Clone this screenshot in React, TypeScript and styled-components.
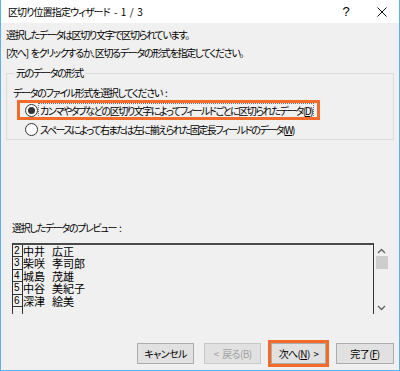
import React from "react";
import styled, { createGlobalStyle } from "styled-components";

const Global = createGlobalStyle`
  html, body { margin: 0; padding: 0; background: #f0f0f0; }
  body {
    font-family: "Noto Sans CJK JP", "Noto Sans", sans-serif;
    font-size: 10px;
    letter-spacing: -1.3px;
    word-spacing: 2px;
    color: #000;
    font-feature-settings: "palt";
  }
  * { box-sizing: border-box; }
`;

const Window = styled.div`
  width: 400px;
  height: 371px;
  border: 1px solid #5cb0ec;
  border-top: none;
  display: flex;
  flex-direction: column;
  background: #f0f0f0;
`;

const TitleBar = styled.div`
  height: 23px;
  background: #fff;
  display: flex;
  align-items: center;
  padding-left: 7px;
  flex-shrink: 0;
`;

const Title = styled.div`
  flex: 1;
  line-height: 16px;
  letter-spacing: -0.9px;
  word-spacing: 3px;
  white-space: pre;
`;

const Help = styled.div`
  width: 14px;
  margin-right: 12px;
  text-align: center;
  font-family: "Liberation Sans", sans-serif;
  font-size: 13px;
  letter-spacing: 0;
`;

const Close = styled.div`
  width: 34px;
  display: flex;
  justify-content: center;
  align-items: center;
`;

const Body = styled.div`
  flex: 1;
  display: flex;
  flex-direction: column;
  padding: 0 5px;
`;

const Line = styled.div<{ $top?: number; $indent?: number }>`
  line-height: 18px;
  margin-top: ${(p) => p.$top ?? 0}px;
  padding-left: ${(p) => p.$indent ?? 0}px;
  white-space: pre;
`;

const Group = styled.fieldset`
  margin: 3px 0 0 0;
  padding: 0 0 3px 6px;
  border: 1px solid #dcdcdc;
  min-width: 0;
`;

const Legend = styled.legend`
  margin-left: 1px;
  padding: 0 2px;
  line-height: 16px;
`;

const Options = styled.div`
  display: flex;
  flex-direction: column;
  align-items: flex-start;
  gap: 5px;
  margin: 1px 0 0 7px;
`;

const OptionRow = styled.div<{ $marked?: boolean }>`
  height: 14px;
  display: inline-flex;
  align-items: center;
  padding: 0 7px 0 5px;
  width: ${(p) => (p.$marked ? "297px" : "auto")};
  outline: ${(p) => (p.$marked ? "3px solid #f26b2a" : "none")};
  white-space: pre;
`;

const Radio = styled.span<{ $checked?: boolean }>`
  width: 13px;
  height: 13px;
  border-radius: 50%;
  border: 1px solid #333;
  background: #fff;
  flex-shrink: 0;
  display: flex;
  align-items: center;
  justify-content: center;
  &::after {
    content: "";
    width: 7px;
    height: 7px;
    border-radius: 50%;
    background: #333;
    display: ${(p) => (p.$checked ? "block" : "none")};
  }
`;

const OptionText = styled.span<{ $focus?: boolean }>`
  line-height: 13px;
  padding: 0 1px;
  letter-spacing: -1.45px;
  border: 1px ${(p) => (p.$focus ? "dotted #6d6d6d" : "solid transparent")};
`;

const PreviewRow = styled.div`
  display: flex;
  margin: 6px 0 0 6px;
  height: 71px;
`;

const PreviewBox = styled.div`
  width: 362px;
  border-top: 2px solid #4a4a4a;
  border-left: 1px solid #333;
  border-right: 1px solid #333;
  display: flex;
  overflow: hidden;
`;

const NumCol = styled.div`
  width: 10px;
  border-right: 1px solid #333;
  display: flex;
  flex-direction: column;
`;

const NumCell = styled.div`
  height: 12.4px;
  border-bottom: 1px solid #333;
  font-family: "Liberation Sans", sans-serif;
  font-size: 10px;
  letter-spacing: 0;
  line-height: 12px;
  padding-left: 1px;
  flex-shrink: 0;
`;

const DataCol = styled.div`
  display: flex;
  flex-direction: column;
`;

const DataRow = styled.div`
  height: 12.4px;
  line-height: 12.4px;
  display: grid;
  grid-template-columns: 29px auto;
  font-size: 11px;
  letter-spacing: 0;
  flex-shrink: 0;
`;

const ScrollBar = styled.div`
  width: 14px;
  display: flex;
  flex-direction: column;
  align-items: center;
  padding: 5px 0 3px 1px;
`;

const Thumb = styled.div`
  width: 12px;
  height: 13px;
  background: #cdcdcd;
  margin-top: 2px;
`;

const Spacer = styled.div`
  flex: 1;
`;

const Buttons = styled.div`
  display: flex;
  justify-content: flex-end;
  gap: 10px;
  margin-top: 29px;
`;

const Button = styled.div<{ $w: number; $disabled?: boolean; $marked?: boolean }>`
  width: ${(p) => p.$w}px;
  height: 21px;
  background: #e1e1e1;
  border: 1px solid ${(p) => (p.$disabled ? "#c8c8c8" : "#adadad")};
  color: ${(p) => (p.$disabled ? "#a0a0a0" : "#000")};
  display: flex;
  align-items: center;
  justify-content: center;
  white-space: pre;
  letter-spacing: -0.6px;
  outline: ${(p) => (p.$marked ? "3px solid #f26b2a" : "none")};
  line-height: 14px;
`;

const U = styled.span`
  text-decoration: underline;
`;

const names: [string, string, string][] = [
  ["2", "中井", "広正"],
  ["3", "柴咲", "孝司郎"],
  ["4", "城島", "茂雄"],
  ["5", "中谷", "美紀子"],
  ["6", "深津", "絵美"],
];

const Chevron = ({ up }: { up?: boolean }) => (
  <svg width="9" height="6" viewBox="0 0 9 6">
    <path
      d={up ? "M1 5 L4.5 1.5 L8 5" : "M1 1 L4.5 4.5 L8 1"}
      fill="none"
      stroke="#606060"
      strokeWidth="1.3"
    />
  </svg>
);

export default function App() {
  return (
    <>
      <Global />
      <Window>
        <TitleBar>
          <Title>区切り位置指定ウィザード - 1 / 3</Title>
          <Help>?</Help>
          <Close>
            <svg width="10" height="10" viewBox="0 0 10 10">
              <path d="M0.5 0.5 L9.5 9.5 M9.5 0.5 L0.5 9.5" stroke="#111" strokeWidth="1" />
            </svg>
          </Close>
        </TitleBar>
        <Body>
          <Line $top={3}>選択したデータは区切り文字で区切られています。</Line>
          <Line>[次へ] をクリックするか、区切るデータの形式を指定してください。</Line>
          <Group>
            <Legend>元のデータの形式</Legend>
            <Line $top={3}>データのファイル形式を選択してください :</Line>
            <Options>
              <OptionRow $marked>
                <Radio $checked />
                <OptionText $focus>
                  カンマやタブなどの区切り文字によってフィールドごとに区切られたデータ(<U>D</U>)
                </OptionText>
              </OptionRow>
              <OptionRow>
                <Radio />
                <OptionText>
                  スペースによって右または左に揃えられた固定長フィールドのデータ(<U>W</U>)
                </OptionText>
              </OptionRow>
            </Options>
          </Group>
          <Line $top={79} $indent={6}>
            選択したデータのプレビュー :
          </Line>
          <PreviewRow>
            <PreviewBox>
              <NumCol>
                {names.map((n) => (
                  <NumCell key={n[0]}>{n[0]}</NumCell>
                ))}
              </NumCol>
              <DataCol>
                {names.map((n) => (
                  <DataRow key={n[0]}>
                    <span>{n[1]}</span>
                    <span>{n[2]}</span>
                  </DataRow>
                ))}
              </DataCol>
            </PreviewBox>
            <ScrollBar>
              <Chevron up />
              <Thumb />
              <Spacer />
              <Chevron />
            </ScrollBar>
          </PreviewRow>
          <Buttons>
            <Button $w={57}>キャンセル</Button>
            <Button $w={57} $disabled>
              &lt; 戻る(B)
            </Button>
            <Button $w={55} $marked>
              次へ(<U>N</U>) &gt;
            </Button>
            <Button $w={58}>
              完了(<U>F</U>)
            </Button>
          </Buttons>
        </Body>
      </Window>
    </>
  );
}
